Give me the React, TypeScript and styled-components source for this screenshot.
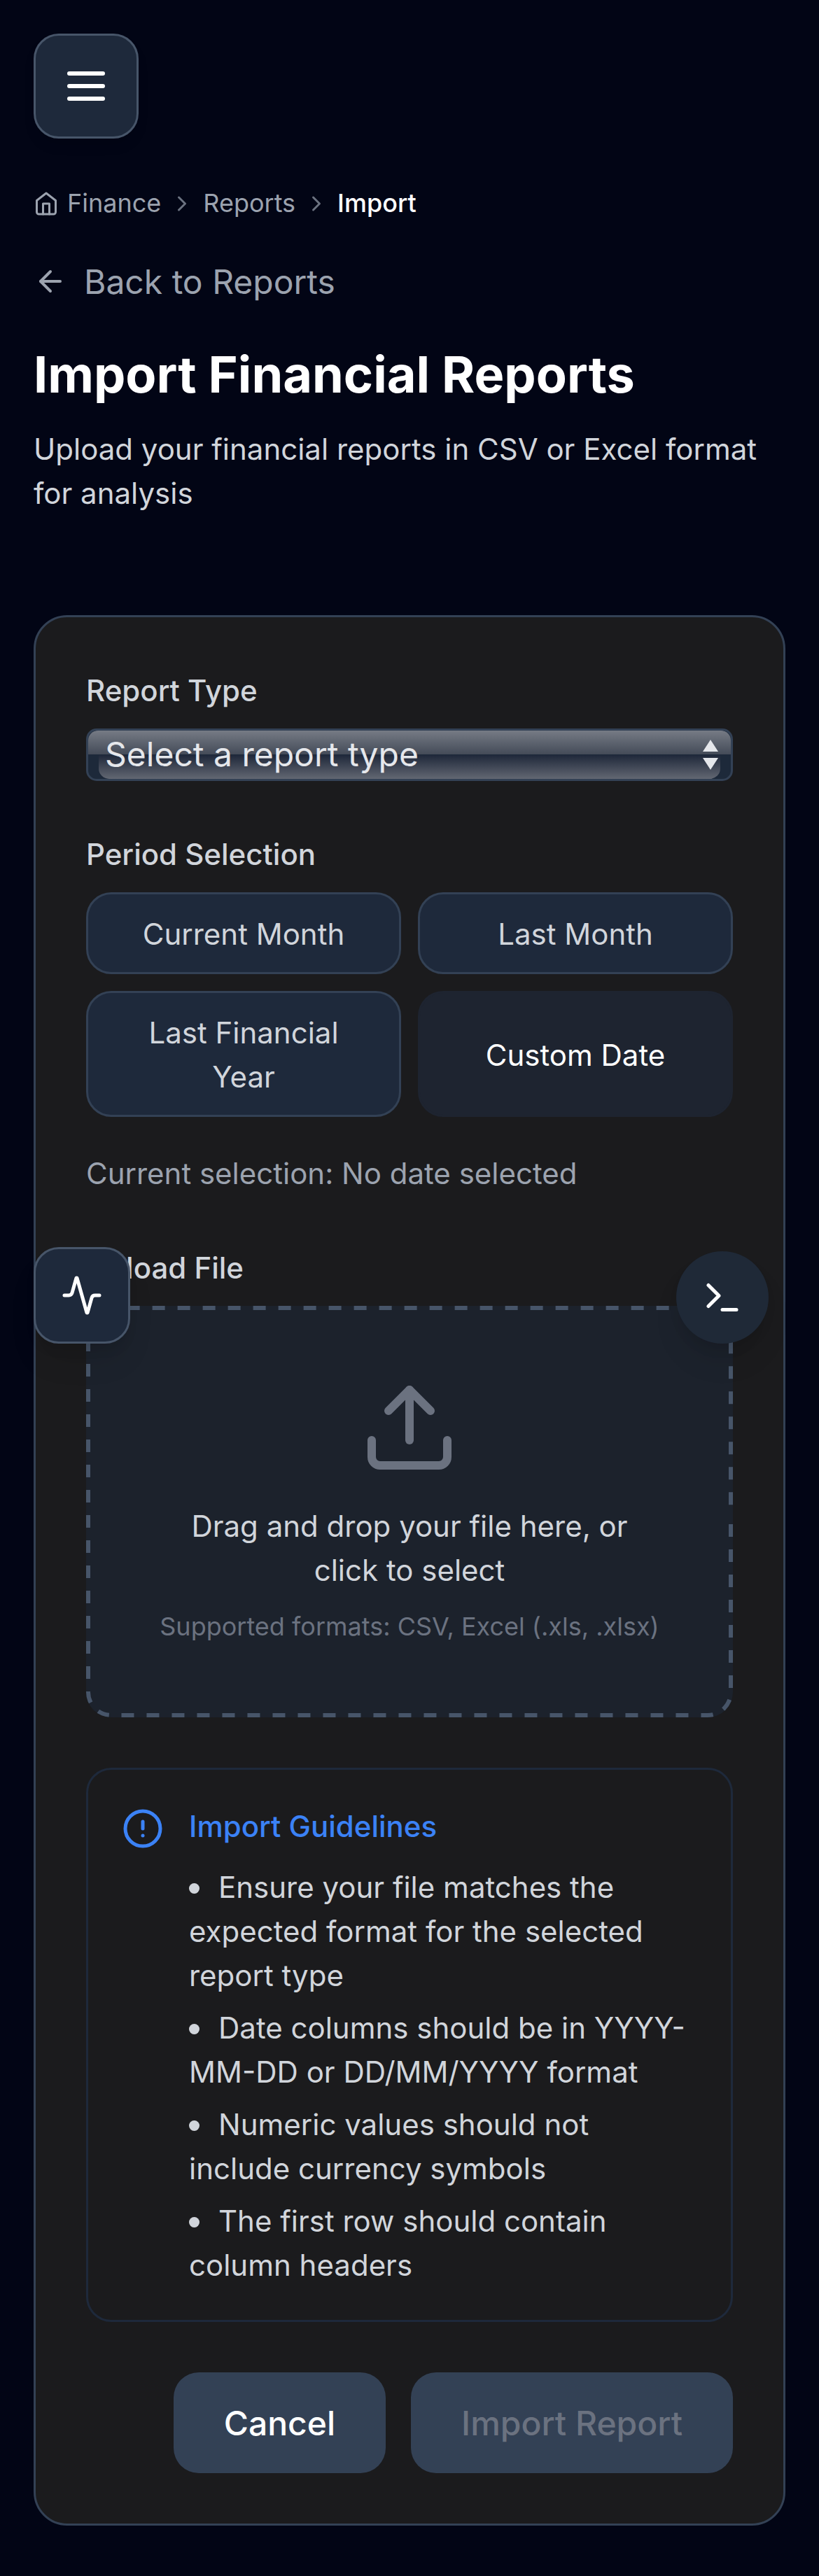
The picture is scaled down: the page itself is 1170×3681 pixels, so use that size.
import React from "react";
import styled, { createGlobalStyle } from "styled-components";

const GlobalStyle = createGlobalStyle`
  *, *::before, *::after { box-sizing: border-box; }
  html, body { margin: 0; padding: 0; background: #020515; }
  body { font-family: Inter, "Liberation Sans", sans-serif; -webkit-font-smoothing: antialiased; }
  button { font: inherit; margin: 0; }
`;

const Page = styled.main`
  position: relative;
  width: 1170px;
  min-height: 3681px;
  padding: 48px 48px 72px;
  background: #020515;
  color: #d1d5db;
  display: flex;
  flex-direction: column;
  align-items: stretch;
`;

const MenuButton = styled.button`
  width: 150px;
  height: 150px;
  display: flex;
  align-items: center;
  justify-content: center;
  padding: 0;
  border: 3px solid #475569;
  border-radius: 36px;
  background: #1e293b;
  color: #fff;
  box-shadow: 0 12px 18px -3px rgba(0, 0, 0, 0.1);
`;

const Breadcrumb = styled.nav`
  display: flex;
  align-items: center;
  gap: 12px;
  height: 54px;
  margin-top: 66px;
  font-size: 36px;
  line-height: 52px;
  color: #9ca3af;
`;

const Crumb = styled.span<{ $current?: boolean }>`
  padding-bottom: 2px;
  color: ${(p) => (p.$current ? "#fff" : "#9ca3af")};
  font-weight: ${(p) => (p.$current ? 500 : 400)};
`;

const BackLink = styled.a`
  display: flex;
  align-items: center;
  gap: 24px;
  height: 72px;
  margin-top: 48px;
  font-size: 48px;
  line-height: 70px;
  color: #9ca3af;
`;

const BackText = styled.span`
  padding-top: 2px;
`;

const Title = styled.h1`
  margin: 49px 0 0;
  font-size: 72px;
  line-height: 96px;
  font-weight: 700;
  color: #fff;
`;

const Lead = styled.p`
  margin: 27px 0 0;
  font-size: 42px;
  line-height: 63px;
  color: #d1d5db;
`;

const Card = styled.section`
  margin-top: 143px;
  padding: 72px;
  border: 3px solid #334155;
  border-radius: 48px;
  background: #1b1b1d;
  display: flex;
  flex-direction: column;
  gap: 72px;
`;

const Field = styled.div`
  display: flex;
  flex-direction: column;
`;

const Label = styled.label`
  padding-top: 1px;
  margin-bottom: 23px;
  font-size: 42px;
  line-height: 63px;
  font-weight: 500;
  color: #d1d5db;
`;

const SelectBox = styled.div`
  height: 75px;
  display: flex;
  align-items: center;
  justify-content: space-between;
  padding: 0 18px 0 24px;
  border: 3px solid #334155;
  border-radius: 15px;
  background: #1d293a;
  color: #e5e7eb;
  font-size: 48px;
  line-height: 67px;
  position: relative;
  overflow: hidden;

  &::before {
    content: "";
    position: absolute;
    left: 0;
    right: 0;
    top: 0;
    height: 34px;
    border-radius: 14px 14px 0 0;
    background: linear-gradient(#767b85, #444b58);
  }
  &::after {
    content: "";
    position: absolute;
    left: 15px;
    right: 15px;
    top: 35px;
    bottom: 0;
    border-radius: 0 0 15px 15px;
    background: linear-gradient(#1f283a, #626772);
  }
`;

const SelectValue = styled.span`
  position: relative;
  z-index: 1;
  padding-bottom: 2px;
`;

const SelectArrows = styled.svg`
  position: relative;
  z-index: 1;
`;

const PeriodGrid = styled.div`
  display: grid;
  grid-template-columns: 1fr 1fr;
  gap: 24px;
`;

const PeriodButton = styled.button<{ $active?: boolean }>`
  padding: 25px 48px 23px;
  border: 3px solid ${(p) => (p.$active ? "#1e2430" : "#334155")};
  border-radius: 36px;
  background: ${(p) => (p.$active ? "#1e2430" : "#1e293b")};
  color: ${(p) => (p.$active ? "#fff" : "#d1d5db")};
  font-size: 42px;
  line-height: 63px;
`;

const Selection = styled.p`
  margin: 49px 0 -1px;
  font-size: 42px;
  line-height: 63px;
  color: #9ca3af;
`;

const DropZone = styled.div`
  position: relative;
  height: 588px;
  padding: 102px;
  border-radius: 36px;
  overflow: hidden;
  background: #1c222c;
  display: flex;
  flex-direction: column;
  align-items: center;
  text-align: center;
`;

const DashedOutline = styled.svg`
  position: absolute;
  inset: 0;
  pointer-events: none;
`;

const DropText = styled.p`
  margin: 37px 0 0;
  font-size: 42px;
  line-height: 63px;
  color: #d1d5db;
`;

const DropHint = styled.p`
  margin: 22px 0 0;
  font-size: 36px;
  line-height: 54px;
  color: #6b7280;
  white-space: nowrap;
`;

const Guidelines = styled.div`
  display: flex;
  gap: 36px;
  padding: 48px;
  border: 3px solid #1e293b;
  border-radius: 36px;
`;

const GuideIcon = styled.div`
  flex: none;
  width: 60px;
  height: 60px;
  margin-top: 6px;
  color: #3b82f6;
`;

const GuideBody = styled.div`
  flex: 1;
  min-width: 0;
  padding: 1px 9px 0 0;
  margin-bottom: -1px;
  font-size: 42px;
  line-height: 63px;
`;

const GuideTitle = styled.h2`
  margin: 0 0 24px;
  font: inherit;
  font-weight: 500;
  color: #3b82f6;
`;

const GuideList = styled.ul`
  margin: 0;
  padding: 0;
  list-style: none;
  display: flex;
  flex-direction: column;
  gap: 12px;
`;

const GuideItem = styled.li`
  &::before {
    content: "";
    display: inline-block;
    width: 15px;
    height: 15px;
    margin-right: 27px;
    border-radius: 50%;
    background: #d1d5db;
    vertical-align: 6px;
  }
`;

const Actions = styled.div`
  display: flex;
  justify-content: flex-end;
  gap: 36px;
`;

const ActionButton = styled.button<{ $muted?: boolean }>`
  height: 144px;
  padding: 2px 72px 0;
  border: 0;
  border-radius: 36px;
  background: #334155;
  color: ${(p) => (p.$muted ? "#6b7280" : "#fff")};
  font-size: 48px;
  line-height: 72px;
  font-weight: 500;
`;

const ActivityButton = styled.button`
  position: absolute;
  left: 48px;
  top: 1782px;
  width: 138px;
  height: 138px;
  padding: 0;
  display: flex;
  align-items: center;
  justify-content: center;
  border: 3px solid #475569;
  border-radius: 36px;
  background: #1e293b;
  color: #fff;
  box-shadow: 0 30px 45px -9px rgba(0, 0, 0, 0.1), 0 12px 18px -6px rgba(0, 0, 0, 0.1);
`;

const ConsoleButton = styled.button`
  position: absolute;
  left: 966px;
  top: 1788px;
  width: 132px;
  height: 132px;
  padding: 0;
  display: flex;
  align-items: center;
  justify-content: center;
  border: 0;
  border-radius: 50%;
  background: #1f2937;
  color: #fff;
  box-shadow: 0 30px 45px -9px rgba(0, 0, 0, 0.1), 0 12px 18px -6px rgba(0, 0, 0, 0.1);
`;

const IconSvg = styled.svg`
  display: block;
  flex: none;
`;

type IconProps = { size: number; color?: string; children: React.ReactNode };

const Icon = ({ size, color = "currentColor", children }: IconProps) => (
  <IconSvg
    width={size}
    height={size}
    viewBox="0 0 24 24"
    fill="none"
    stroke={color}
    strokeWidth={2}
    strokeLinecap="round"
    strokeLinejoin="round"
  >
    {children}
  </IconSvg>
);

const Chevron = () => (
  <Icon size={36} color="#6b7280">
    <path d="m9 18 6-6-6-6" />
  </Icon>
);

const periods = ["Current Month", "Last Month", "Last Financial Year", "Custom Date"];

const guidelines = [
  "Ensure your file matches the expected format for the selected report type",
  "Date columns should be in YYYY-MM-DD or DD/MM/YYYY format",
  "Numeric values should not include currency symbols",
  "The first row should contain column headers",
];

export default function App() {
  return (
    <>
      <GlobalStyle />
      <Page>
        <MenuButton aria-label="Menu">
          <Icon size={72}>
            <path d="M4 6h16M4 12h16M4 18h16" />
          </Icon>
        </MenuButton>

        <Breadcrumb>
          <Icon size={36}>
            <path d="m3 9 9-7 9 7v11a2 2 0 0 1-2 2H5a2 2 0 0 1-2-2z" />
            <path d="M9 22V12h6v10" />
          </Icon>
          <Crumb>Finance</Crumb>
          <Chevron />
          <Crumb>Reports</Crumb>
          <Chevron />
          <Crumb $current>Import</Crumb>
        </Breadcrumb>

        <BackLink>
          <Icon size={48}>
            <path d="m12 19-7-7 7-7" />
            <path d="M19 12H5" />
          </Icon>
          <BackText>Back to Reports</BackText>
        </BackLink>

        <Title>Import Financial Reports</Title>
        <Lead>Upload your financial reports in CSV or Excel format for analysis</Lead>

        <Card>
          <Field>
            <Label>Report Type</Label>
            <SelectBox>
              <SelectValue>Select a report type</SelectValue>
              <SelectArrows width="22" height="43" viewBox="0 0 22 43" fill="#e5e7eb">
                <path d="M11 0 22 17H0z" />
                <path d="M11 43 0 26h22z" />
              </SelectArrows>
            </SelectBox>
          </Field>

          <Field>
            <Label>Period Selection</Label>
            <PeriodGrid>
              {periods.map((name) => (
                <PeriodButton key={name} $active={name === "Custom Date"}>
                  {name}
                </PeriodButton>
              ))}
            </PeriodGrid>
            <Selection>Current selection: No date selected</Selection>
          </Field>

          <Field>
            <Label>Upload File</Label>
            <DropZone>
              {/* The 12px stroke is centred on the edge, so its inner 6px shows. */}
              <DashedOutline width="924" height="588" viewBox="0 0 924 588" fill="none">
                <path
                  d="M924 294V552A36 36 0 0 1 888 588H36A36 36 0 0 1 0 552V36A36 36 0 0 1 36 0H888A36 36 0 0 1 924 36V294"
                  stroke="#475569"
                  strokeWidth={12}
                  strokeDasharray="18 18"
                  strokeDashoffset={18}
                />
              </DashedOutline>
              <Icon size={144} color="#6b7280">
                <path d="M21 15v4a2 2 0 0 1-2 2H5a2 2 0 0 1-2-2v-4" />
                <path d="m17 8-5-5-5 5" />
                <path d="M12 3v12" />
              </Icon>
              <DropText>Drag and drop your file here, or click to select</DropText>
              <DropHint>Supported formats: CSV, Excel (.xls, .xlsx)</DropHint>
            </DropZone>
          </Field>

          <Guidelines>
            <GuideIcon>
              <Icon size={60}>
                <circle cx="12" cy="12" r="10" />
                <path d="M12 8v4M12 16h.01" />
              </Icon>
            </GuideIcon>
            <GuideBody>
              <GuideTitle>Import Guidelines</GuideTitle>
              <GuideList>
                {guidelines.map((text) => (
                  <GuideItem key={text}>{text}</GuideItem>
                ))}
              </GuideList>
            </GuideBody>
          </Guidelines>

          <Actions>
            <ActionButton>Cancel</ActionButton>
            <ActionButton $muted>Import Report</ActionButton>
          </Actions>
        </Card>

        <ActivityButton aria-label="Activity">
          <Icon size={60}>
            <path d="M22 12h-2.48a2 2 0 0 0-1.93 1.46l-2.35 8.36a.25.25 0 0 1-.48 0L9.24 2.18a.25.25 0 0 0-.48 0l-2.35 8.36A2 2 0 0 1 4.49 12H2" />
          </Icon>
        </ActivityButton>
        <ConsoleButton aria-label="Console">
          <Icon size={60}>
            <path d="m4 17 6-6-6-6" />
            <path d="M12 19h8" />
          </Icon>
        </ConsoleButton>
      </Page>
    </>
  );
}
